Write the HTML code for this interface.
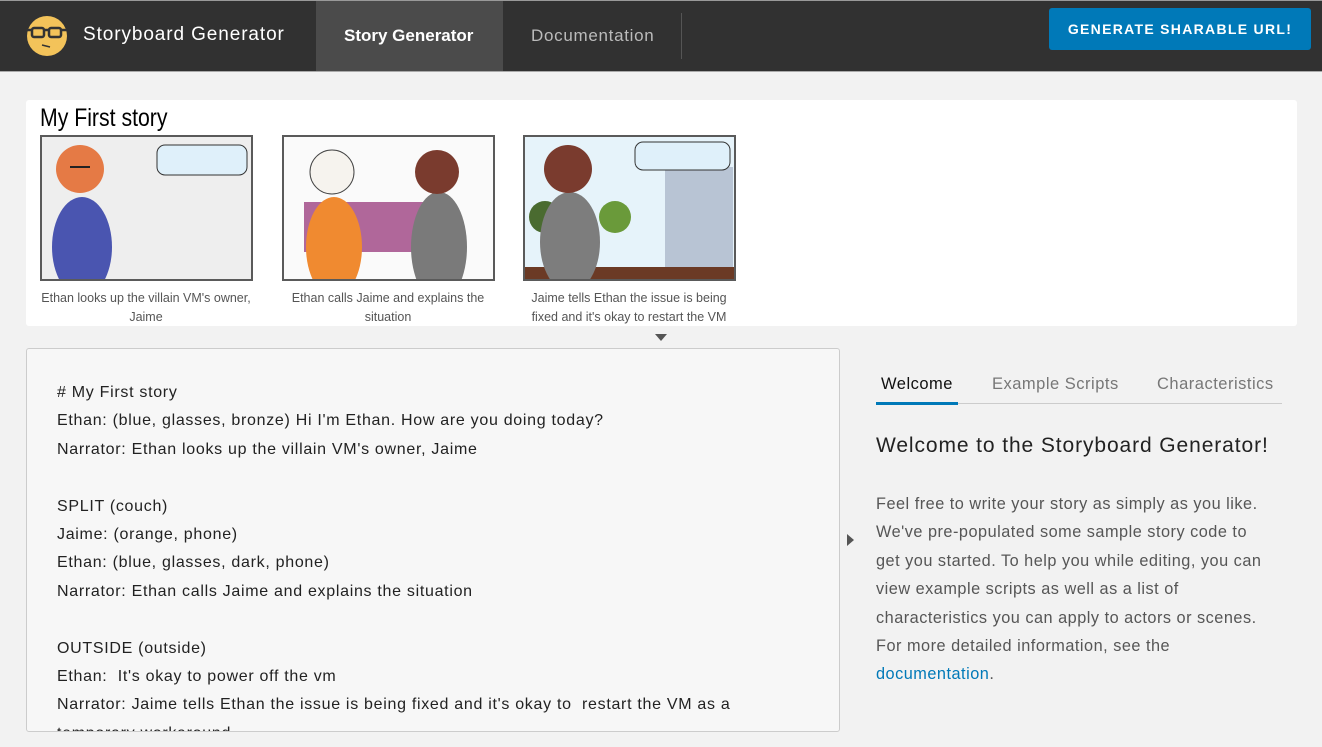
<!DOCTYPE html>
<html><head><meta charset="utf-8"><style>
*{box-sizing:border-box;margin:0;padding:0}
body{width:1322px;height:747px;overflow:hidden;background:#f2f2f2;font-family:"Liberation Sans",sans-serif;position:relative}
.hdr{position:absolute;left:0;top:0;width:1322px;height:72px;background:#313131;border-top:1px solid #999;border-bottom:1px solid #aaa}
.abs{position:absolute}
.card{position:absolute;left:26px;top:100px;width:1271px;height:226px;background:#fff;border-radius:3px}
.fr{position:absolute;top:135px;width:213px;height:146px;border:2px solid #5a5a5a;overflow:hidden}
.cap{position:absolute;top:289px;width:230px;text-align:center;font-size:12.5px;line-height:19px;color:#555;font-family:"Liberation Sans Narrow","Liberation Sans",sans-serif}
.ed{position:absolute;left:26px;top:348px;width:814px;height:384px;background:#f7f7f7;border:1px solid #ccc;border-radius:3px;overflow:hidden;padding:30px 0 0 30px;font-size:16px;line-height:28.4px;color:#222;letter-spacing:0.7px}
.tab{position:absolute;top:375px;font-size:16.5px;color:#777;letter-spacing:0.5px}
.p{position:absolute;left:876px;top:490px;width:440px;white-space:nowrap;font-size:16.3px;line-height:28.4px;color:#565656;letter-spacing:0.5px}
</style></head><body>
<div class="hdr"></div>
<svg class="abs" style="left:26px;top:15px" width="42" height="42"><circle cx="21" cy="21" r="20" fill="#f3c35a"/><g fill="none" stroke="#333" stroke-width="2.5"><rect x="6" y="13" width="12" height="9" rx="2"/><rect x="23" y="13" width="12" height="9" rx="2"/><path d="M0 15h6M18 15h5M35 15h6"/><path d="M16 30l8 2" stroke-width="1.5"/></g></svg>
<div class="abs" style="left:83px;top:24px;font-size:19px;color:#fff;letter-spacing:0.9px">Storyboard Generator</div>
<div class="abs" style="left:316px;top:1px;width:187px;height:70px;background:#4b4b4b"></div>
<div class="abs" style="left:344px;top:26px;font-size:17px;color:#fff;font-weight:bold">Story Generator</div>
<div class="abs" style="left:531px;top:26px;font-size:17px;color:#bbb;letter-spacing:0.7px">Documentation</div>
<div class="abs" style="left:681px;top:13px;width:1px;height:46px;background:#555"></div>
<div class="abs" style="left:1049px;top:8px;width:262px;height:42px;background:#0079b8;border-radius:3px;color:#fff;font-size:14px;font-weight:bold;letter-spacing:1.3px;text-align:center;line-height:43px">GENERATE SHARABLE URL!</div>
<div class="card"></div>
<div class="abs" style="left:40px;top:104px;font-size:25px;color:#000;font-family:'Liberation Sans Narrow',sans-serif;transform:scaleX(0.85);transform-origin:0 0">My First story</div>
<div class="fr" style="left:40px;background:#eee"><svg width="213" height="146"><ellipse cx="40" cy="110" rx="30" ry="50" fill="#4a55b0"/><circle cx="38" cy="32" r="24" fill="#e57a45"/><path d="M28 30h20" stroke="#222" stroke-width="2"/><rect x="115" y="8" width="90" height="30" rx="8" fill="#dff0fa" stroke="#333"/></svg></div>
<div class="fr" style="left:282px;background:#fafafa"><svg width="213" height="146"><rect x="20" y="65" width="150" height="50" fill="#b0679a"/><ellipse cx="50" cy="110" rx="28" ry="50" fill="#f08a30"/><circle cx="48" cy="35" r="22" fill="#f6f3ee" stroke="#444"/><ellipse cx="155" cy="110" rx="28" ry="55" fill="#7a7a7a"/><circle cx="153" cy="35" r="22" fill="#7a3b2e"/></svg></div>
<div class="fr" style="left:523px;background:#e6f3fa"><svg width="213" height="146"><rect x="140" y="30" width="68" height="110" fill="#b8c4d4"/><circle cx="20" cy="80" r="16" fill="#4a6b30"/><circle cx="90" cy="80" r="16" fill="#6a9a3a"/><rect y="130" width="213" height="16" fill="#6b3a25"/><ellipse cx="45" cy="105" rx="30" ry="50" fill="#7d7d7d"/><circle cx="43" cy="32" r="24" fill="#7a3b2e"/><rect x="110" y="5" width="95" height="28" rx="8" fill="#dff0fa" stroke="#333"/></svg></div>
<div class="cap" style="left:31px">Ethan looks up the villain VM's owner,<br>Jaime</div>
<div class="cap" style="left:273px">Ethan calls Jaime and explains the<br>situation</div>
<div class="cap" style="left:514px">Jaime tells Ethan the issue is being<br>fixed and it's okay to restart the VM</div>
<div class="abs" style="left:655px;top:334px;width:0;height:0;border-left:6px solid transparent;border-right:6px solid transparent;border-top:7px solid #555"></div>
<div class="ed"># My First story<br>Ethan: (blue, glasses, bronze) Hi I'm Ethan. How are you doing today?<br>Narrator: Ethan looks up the villain VM's owner, Jaime<br><br>SPLIT (couch)<br>Jaime: (orange, phone)<br>Ethan: (blue, glasses, dark, phone)<br>Narrator: Ethan calls Jaime and explains the situation<br><br>OUTSIDE (outside)<br>Ethan:&nbsp; It's okay to power off the vm<br>Narrator: Jaime tells Ethan the issue is being fixed and it's okay to&nbsp; restart the VM as a<br>temporary workaround</div>
<div class="abs" style="left:847px;top:534px;width:0;height:0;border-top:6px solid transparent;border-bottom:6px solid transparent;border-left:7px solid #555"></div>
<div class="tab" style="left:881px;color:#111">Welcome</div>
<div class="tab" style="left:992px">Example Scripts</div>
<div class="tab" style="left:1157px">Characteristics</div>
<div class="abs" style="left:876px;top:403px;width:406px;height:1px;background:#ccc"></div>
<div class="abs" style="left:876px;top:402px;width:82px;height:3px;background:#0079b8"></div>
<div class="abs" style="left:876px;top:434px;font-size:21px;color:#222;letter-spacing:0.9px">Welcome to the Storyboard Generator!</div>
<div class="p">Feel free to write your story as simply as you like.<br>We've pre-populated some sample story code to<br>get you started. To help you while editing, you can<br>view example scripts as well as a list of<br>characteristics you can apply to actors or scenes.<br>For more detailed information, see the<br><span style="color:#0079b8">documentation</span>.</div>
</body></html>
